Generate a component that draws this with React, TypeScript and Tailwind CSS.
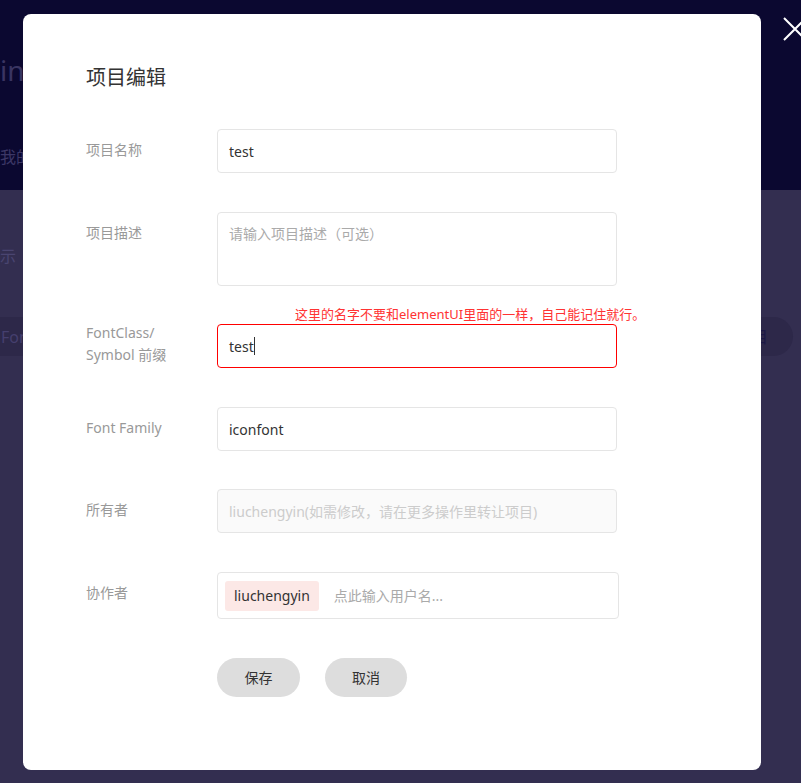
import React from 'react';

const font = { fontFamily: '"Noto Sans", "Noto Sans CJK SC", sans-serif' };

const Label: React.FC<{ children: React.ReactNode; className?: string }> = ({ children, className }) => (
  <div className={`w-[131px] shrink-0 text-[14px] leading-[20px] text-[#999999] ${className ?? 'pt-[11px]'}`}>
    {children}
  </div>
);

const inputBox =
  'w-[400px] h-[44px] rounded-[4px] border border-[#e5e5e5] px-[11px] flex items-center text-[14px]';

export default function App() {
  return (
    <div className="relative w-[801px] h-[783px] overflow-hidden" style={font}>
      {/* dimmed page behind the dialog */}
      <div className="flex flex-col h-full">
        <div className="h-[190px] bg-[#0b0830] flex flex-col">
          <div className="mt-[52px] text-[28px] leading-[36px] text-[#3a3562]">in</div>
          <div className="mt-[58px] text-[16px] leading-[22px] text-[#3c3766]">我的</div>
        </div>
        <div className="flex-1 bg-[#332e50] flex flex-col">
          <div className="mt-[55px] text-[16px] leading-[22px] text-[#4a4570]">示</div>
          <div className="mt-[50px] flex justify-between">
            <div className="h-[39px] w-[60px] rounded-r-full bg-[#2d2849] flex items-center pl-[1px] text-[16px] text-[#453f6e]">
              Font
            </div>
            <div className="h-[39px] w-[110px] mr-[8px] rounded-full bg-[#2d2849] flex items-center pl-[53px] text-[16px] text-[#1c1845]">
              项目
            </div>
          </div>
        </div>
      </div>

      {/* close */}
      <svg className="absolute left-[783px] top-[17px]" width="24" height="24" viewBox="0 0 24 24">
        <path d="M1 1 L23 23 M23 1 L1 23" stroke="#ffffff" strokeWidth="2" fill="none" />
      </svg>

      {/* dialog */}
      <div className="absolute left-[23px] top-[14px] w-[738px] h-[756px] bg-white rounded-[8px] pl-[63px] pt-[50px]">
        <h2 className="text-[20px] leading-[28px] text-[#333333] mb-[37px]">项目编辑</h2>

        <div className="flex flex-col gap-[39px]">
          <div className="flex">
            <Label>项目名称</Label>
            <div className={`${inputBox} text-[#333333]`}>test</div>
          </div>

          <div className="flex">
            <Label>项目描述</Label>
            <div className="w-[400px] h-[74px] rounded-[4px] border border-[#e5e5e5] px-[11px] pt-[11px] text-[14px] leading-[20px] text-[#aaaaaa]">
              请输入项目描述（可选）
            </div>
          </div>

          <div className="flex -mt-[1px]">
            <Label className="pt-0 -mt-[2px] leading-[22px]">
              FontClass/
              <br />
              Symbol 前缀
            </Label>
            <div className="relative">
              <div className="absolute left-[78px] -top-[19px] whitespace-nowrap text-[13px] leading-[18px] text-[#ff3333]">
                这里的名字不要和elementUI里面的一样，自己能记住就行。
              </div>
              <div className={`${inputBox} border-[#ff0000] text-[#333333]`}>
                test<span className="inline-block w-px h-[18px] bg-[#333333]" />
              </div>
            </div>
          </div>

          <div className="flex">
            <Label>Font Family</Label>
            <div className={`${inputBox} text-[#333333]`}>iconfont</div>
          </div>

          <div className="flex -mt-[1px]">
            <Label>所有者</Label>
            <div className={`${inputBox} bg-[#fafafa] text-[#cccccc]`}>
              liuchengyin(如需修改，请在更多操作里转让项目)
            </div>
          </div>

          <div className="flex">
            <Label>协作者</Label>
            <div className="w-[402px] h-[47px] rounded-[4px] border border-[#e5e5e5] flex items-center pl-[7px] gap-[15px] text-[14px]">
              <span className="h-[30px] px-[9px] rounded-[3px] bg-[#fce8e6] text-[#333333] flex items-center">
                liuchengyin
              </span>
              <span className="text-[#aaaaaa]">点此输入用户名...</span>
            </div>
          </div>

          <div className="flex gap-[25px] pl-[131px]">
            <button className="w-[83px] h-[39px] rounded-full bg-[#dddddd] text-[14px] text-[#333333]">保存</button>
            <button className="w-[82px] h-[39px] rounded-full bg-[#dddddd] text-[14px] text-[#333333]">取消</button>
          </div>
        </div>
      </div>
    </div>
  );
}
